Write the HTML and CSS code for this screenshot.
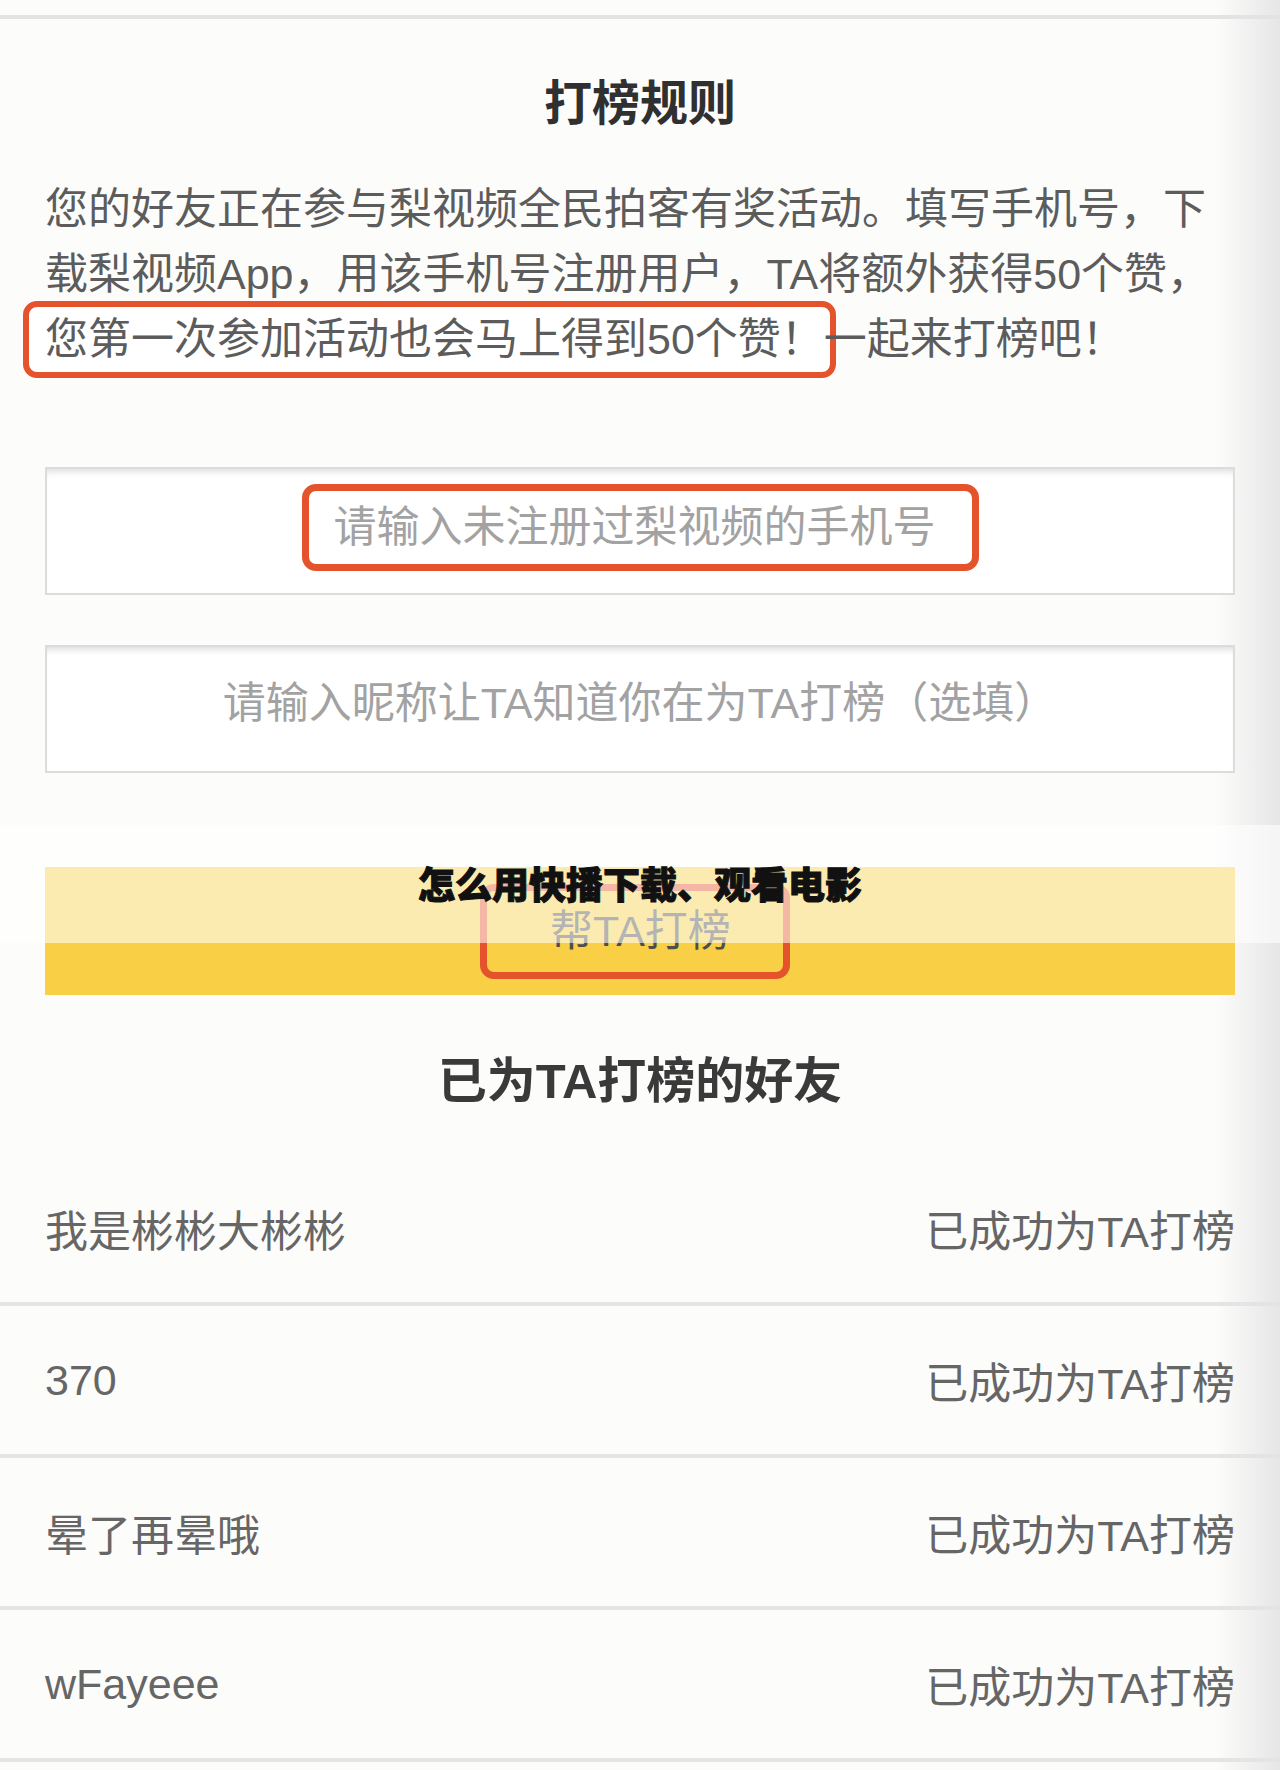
FILE: index.html
```html
<!DOCTYPE html>
<html lang="zh-CN">
<head>
    <meta charset="UTF-8">
    <title>打榜规则</title>
    <link rel="stylesheet" href="styles.css">
</head>
<body>
<div class="topline"></div>

<h1 class="title">打榜规则</h1>
<p class="rules">您的好友正在参与梨视频全民拍客有奖活动。填写手机号，下载梨视频App，用该手机号注册用户，TA将额外获得50个赞，<span class="mark mark-text">您第一次参加活动也会马上得到50个赞！</span>一起来打榜吧！</p>

<div class="field">
    <span class="mark mark-field">请输入未注册过梨视频的手机号</span>
</div>
<div class="field field-second">
    <span>请输入昵称让TA知道你在为TA打榜（选填）</span>
</div>

<div class="btn">
    <span class="mark mark-btn">帮TA打榜</span>
</div>

<h2 class="friends-title">已为TA打榜的好友</h2>
<ul class="friends">
    <li><span>我是彬彬大彬彬</span><span>已成功为TA打榜</span></li>
    <li><span>370</span><span>已成功为TA打榜</span></li>
    <li><span>晕了再晕哦</span><span>已成功为TA打榜</span></li>
    <li><span>wFayeee</span><span>已成功为TA打榜</span></li>
</ul>

<!-- 水印条 -->
<div class="band">怎么用快播下载、观看电影</div>
</body>
</html>
```

FILE: styles.css
```css
body{
    margin: 0;
    font-family: "Liberation Sans", "Noto Sans CJK SC", sans-serif;
    font-size: 43px;
    color: #5c5c5c;
    background: linear-gradient(to right, #fcfcfb calc(100% - 64px), #e6e6e6);
    min-height: 1770px;
    position: relative;
    overflow: hidden;
}
.topline{
    margin-top: 15px;
    height: 4px;
    background-color: #e3e3e3;
}
.title{
    margin: 55px 0 0;
    text-align: center;
    font-size: 48px;
    line-height: 60px;
    font-weight: 700;
    color: #303030;
}
.rules{
    margin: 43px 45px 0;
    line-height: 65px;
}
.mark{
    display: inline-block;
    border: 7px solid #e4532b;
    border-radius: 14px;
    background-color: #fff;
}
.mark-text{
    border-width: 6px;
    margin: -6px -12px -6px -22px;
    padding: 0 6px 0 16px;
}
.field{
    margin: 95px 45px 0;
    height: 124px;
    border: 2px solid #dcdcdc;
    background-color: #fff;
    box-shadow: inset 0 7px 6px -4px rgba(0,0,0,0.13);
    display: flex;
    align-items: center;
    justify-content: center;
    line-height: 65px;
    color: #a2a2a2;
}
.field-second{
    margin-top: 50px;
    padding-bottom: 12px;
    height: 112px;
}
.mark-field{
    padding: 4px 36px 4px 25px;
    margin-top: -8px;
}
.btn{
    margin: 94px 45px 0;
    height: 128px;
    background-color: #f8cf45;
    display: flex;
    align-items: center;
    justify-content: center;
    line-height: 65px;
    color: #4d4d4d;
}
.mark-btn{
    background: transparent;
    padding: 8px 52px 8px 63px;
    margin-left: -10px;
}
.friends-title{
    margin: 56px 0 0;
    text-align: center;
    font-size: 49px;
    line-height: 60px;
    font-weight: 700;
    color: #3a3a3a;
}
.friends{
    list-style: none;
    margin: 43px 0 0;
    padding: 0;
    color: #666;
}
.friends li{
    height: 148px;
    padding: 0 45px;
    border-bottom: 4px solid #e4e4e4;
    display: flex;
    align-items: center;
    justify-content: space-between;
}
.band{
    position: absolute;
    left: 0;
    right: 0;
    top: 825px;
    height: 118px;
    background-color: rgba(255,255,255,0.58);
    text-align: center;
    font-family: "Noto Sans CJK SC", sans-serif;
    font-size: 37px;
    font-weight: 900;
    line-height: 116px;
    color: #111;
    -webkit-text-stroke: 1px #111;
}
```
